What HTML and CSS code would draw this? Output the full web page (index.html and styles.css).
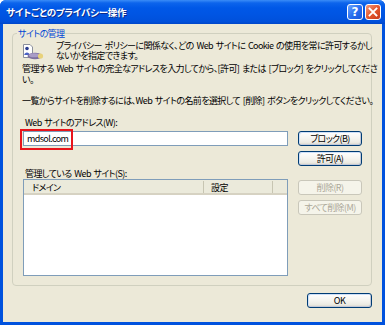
FILE: index.html
```html
<!DOCTYPE html>
<html lang="ja">
<head>
<meta charset="utf-8">
<title>サイトごとのプライバシー操作</title>
<link rel="stylesheet" href="styles.css">
</head>
<body>
<div class="window">
  <div class="titlebar">
    <span class="title">サイトごとのプライバシー操作</span>
    <div class="caption-buttons">
      <span class="cap help">?</span>
      <span class="cap close">
        <svg width="10" height="10" viewBox="0 0 10 10"><path d="M1.5 1.5 L8.5 8.5 M8.5 1.5 L1.5 8.5" stroke="#fff" stroke-width="1.8" stroke-linecap="square"/></svg>
      </span>
    </div>
  </div>
  <div class="client">
    <fieldset class="group">
      <legend>サイトの管理</legend>
      <div class="intro">
        <svg class="icon" width="22" height="16" viewBox="0 0 22 16">
          <path d="M1.5 0.5 H8 L10.5 3 V13.5 H1.5 Z" fill="#fff" stroke="#8a8f9c"/>
          <circle cx="5" cy="4.5" r="1.8" fill="#2b3d8f"/>
          <path d="M2.2 11 C2.4 7.5 7.5 7.5 7.8 11 Z" fill="#4a62c4"/>
          <ellipse cx="13" cy="12" rx="7.5" ry="3.3" fill="#7d6f9e"/>
          <ellipse cx="12" cy="11.2" rx="5" ry="2" fill="#a99cc7"/>
          <ellipse cx="18.5" cy="12" rx="2.6" ry="2.6" fill="#e8d27a"/>
        </svg>
        <p class="p1">プライバシー ポリシーに関係なく、どの Web サイトに Cookie の使用を常に許可するかし<br>ないかを指定できます。</p>
      </div>
      <p class="p2">管理する Web サイトの完全なアドレスを入力してから、[許可] または [ブロック] をクリックしてくださ<br>い。</p>
      <p class="p3">一覧からサイトを削除するには、Web サイトの名前を選択して [削除] ボタンをクリックしてください。</p>
      <div class="label addr-label">Web サイトのアドレス(W):</div>
      <div class="row addr-row">
        <div class="input-wrap">
          <div class="input">mdsol.com</div>
          <span class="highlight"></span>
        </div>
        <div class="btn-col">
          <span class="btn">ブロック(B)</span>
          <span class="btn">許可(A)</span>
        </div>
      </div>
      <div class="label list-label">管理している Web サイト(S):</div>
      <div class="row list-row">
        <div class="list">
          <div class="list-head">
            <span class="col c1">ドメイン</span>
            <span class="col c2">設定</span>
            <span class="col c3"></span>
          </div>
        </div>
        <div class="btn-col btn-col2">
          <span class="btn disabled">削除(R)</span>
          <span class="btn disabled">すべて削除(M)</span>
        </div>
      </div>
    </fieldset>
    <div class="footer">
      <span class="btn ok">OK</span>
    </div>
  </div>
</div>
</body>
</html>
```

FILE: styles.css
```css
* { box-sizing: border-box; }
html, body { margin: 0; padding: 0; background: #fff; }
body {
  font-family: "Noto Sans CJK JP", "Noto Sans", sans-serif;
  font-size: 9px;
  letter-spacing: -0.6px;
  word-spacing: 1.2px;
  font-feature-settings: "palt" 1;
  color: #000;
}
.window {
  width: 385px;
  height: 325px;
  display: flex;
  flex-direction: column;
  background: #0052DE;
  border-radius: 6px 6px 0 0;
  overflow: hidden;
}
.titlebar {
  height: 24px;
  flex: none;
  display: flex;
  align-items: center;
  justify-content: space-between;
  padding: 0 4px 0 6px;
  background: linear-gradient(#3A8CF7 0, #0C64EC 3px, #0058E7 8px, #0055E3 60%, #0050DB 90%, #0046C8 100%);
}
.title {
  color: #fff;
  font-weight: bold;
  font-size: 9.5px;
  letter-spacing: -0.2px;
  text-shadow: 1px 1px 0 #0B2A8C;
  margin-top: -1px;
}
.caption-buttons { display: flex; gap: 2px; margin-top: -1px; }
.cap {
  width: 16px;
  height: 16px;
  border: 1px solid #fff;
  border-radius: 3px;
  display: flex;
  align-items: center;
  justify-content: center;
  color: #fff;
  font-family: "DejaVu Sans", sans-serif;
  font-weight: bold;
  font-size: 12px;
  letter-spacing: 0;
  line-height: 1;
}
.help { background: linear-gradient(135deg, #6EA6FF 0%, #2A6FF0 50%, #1B55D8 100%); }
.close { background: linear-gradient(135deg, #F29A7E 0%, #E4582E 50%, #C7391B 100%); }
.client {
  flex: 1;
  margin: 0 3px 3px;
  background: #ECE9D8;
  display: flex;
  flex-direction: column;
}
.group {
  margin: 4px 10px 0 9px;
  padding: 0 0 9px 0;
  border: 1px solid #D0D0BF;
  border-radius: 4px;
  min-width: 0;
}
.group legend {
  color: #0046D5;
  padding: 0 1px;
  margin-left: 4px;
  line-height: 11px;
}
p { margin: 0; white-space: nowrap; }
.intro {
  display: flex;
  align-items: flex-start;
  padding-left: 9px;
  margin-top: 2px;
}
.icon { flex: none; margin-top: 3px; margin-right: 12px; }
.p1 { line-height: 9.5px; }
.p2 { line-height: 11px; margin: 3px 0 0 9px; }
.p3 { line-height: 11px; margin: 10px 0 0 9px; }
.label { line-height: 11px; white-space: nowrap; }
.addr-label { margin: 11px 0 0 12px; }
.row { display: flex; align-items: flex-start; margin-left: 10px; }
.addr-row { margin-top: 3px; }
.input-wrap { position: relative; width: 265px; flex: none; }
.input {
  height: 15px;
  border: 1px solid #7F9DB9;
  background: #fff;
  padding-left: 3px;
  line-height: 13px;
  font-size: 9px;
}
.highlight {
  position: absolute;
  left: -3px;
  top: -2px;
  width: 53px;
  height: 21px;
  border: 2px solid #E8141B;
}
.btn-col {
  display: flex;
  flex-direction: column;
  gap: 5px;
  margin-left: 10px;
}
.btn {
  width: 64px;
  height: 15px;
  border: 1px solid #003C74;
  border-radius: 3px;
  background: linear-gradient(#FFFFFF 0%, #F5F4EF 50%, #ECEBE4 80%, #D8D3C6 100%);
  box-shadow: inset -1px -1px 0 #C3C9D8, inset 1px 1px 0 #CEE0F8;
  display: flex;
  align-items: center;
  justify-content: center;
  line-height: 1;
  white-space: nowrap;
}
.btn.disabled {
  border-color: #C9C7BA;
  background: #F5F4EA;
  box-shadow: none;
  color: #ACA899;
}
.list-label { margin: 2px 0 0 12px; }
.list-row { margin-top: 0; }
.list {
  width: 265px;
  height: 97px;
  flex: none;
  border: 1px solid #7F9DB9;
  background: #fff;
}
.list-head {
  display: flex;
  height: 15px;
  background: #EBEADB;
  border-bottom: 2px solid #D6D2C2;
}
.col {
  line-height: 13px;
  padding-left: 8px;
  border-right: 1px solid #C7C5B2;
  margin: 1px 0 0;
}
.c1 { width: 180px; }
.c2 { width: 69px; padding-left: 7px; }
.c3 { flex: 1; border-right: none; }
.btn-col2 { margin-top: 1px; }
.footer {
  display: flex;
  justify-content: flex-end;
  padding: 7px 10px 0 0;
}
.ok { width: 65px; }
```
